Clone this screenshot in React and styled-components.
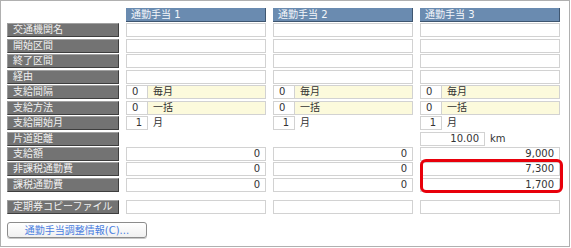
import React from "react";
import styled, { createGlobalStyle } from "styled-components";

const GlobalStyle = createGlobalStyle`
  html, body {
    margin: 0;
    padding: 0;
    background: #ffffff;
  }
  body {
    font-family: "DejaVu Sans", "Noto Sans CJK JP", sans-serif;
    font-size: 10px;
    line-height: 12px;
    color: #333333;
  }
`;

const Frame = styled.div`
  width: 570px;
  height: 247px;
  box-sizing: border-box;
  border: 1px solid #b0b0b0;
  padding: 7px 6px;
  background: #ffffff;
`;

const Grid = styled.div`
  display: grid;
  grid-template-columns: 112px repeat(3, 140px);
  column-gap: 7px;
  row-gap: 1.45px;
  grid-auto-rows: 14px;
  margin-top: ${(props) => props.$offset || "0"};
`;

const ColumnHeader = styled.div`
  grid-row: 1;
  grid-column: ${(props) => props.$col};
  display: flex;
  align-items: center;
  box-sizing: border-box;
  padding-left: 5px;
  background: #6a8bb0;
  border-right: 1px solid #3f5670;
  border-bottom: 1px solid #3f5670;
  color: #f4f7fb;
  white-space: nowrap;
`;

const Label = styled.div`
  grid-row: ${(props) => props.$row};
  grid-column: 1;
  display: flex;
  align-items: center;
  box-sizing: border-box;
  padding-left: 5px;
  background: #737373;
  border: 1px solid;
  border-color: #a0a0a0 #3e3e3e #3e3e3e #9a9a9a;
  color: #f0f0f0;
  white-space: nowrap;
`;

const Cell = styled.div`
  grid-row: ${(props) => props.$row};
  grid-column: ${(props) => props.$col};
  display: flex;
  align-items: stretch;
  min-width: 0;
`;

const Box = styled.div`
  display: flex;
  align-items: center;
  justify-content: ${(props) => (props.$align === "right" ? "flex-end" : "flex-start")};
  box-sizing: border-box;
  width: ${(props) => props.$w || "100%"};
  flex: ${(props) => (props.$grow ? "1" : "none")};
  padding: 0 5px;
  background: ${(props) => (props.$tone === "yellow" ? "#fcfadc" : "#ffffff")};
  border: 1px solid #d2d2d2;
  margin-left: ${(props) => (props.$joined ? "-1px" : "0")};
  white-space: nowrap;
`;

const Unit = styled.span`
  display: flex;
  align-items: center;
  padding-left: 5px;
  white-space: nowrap;
`;

const Highlight = styled.div`
  grid-column: 4;
  grid-row: 11 / span 2;
  margin: -3px -3px -1px 0;
  border: 3px solid #e8000b;
  border-radius: 6px;
  pointer-events: none;
  z-index: 1;
`;

const ActionButton = styled.button`
  display: block;
  margin-top: 8px;
  width: 140px;
  height: 16px;
  padding: 0;
  box-sizing: border-box;
  border: 1px solid #8c8c8c;
  border-radius: 3px;
  background: linear-gradient(#ffffff, #f0f0f0);
  box-shadow: 0 1px 0 #c8c8c8;
  color: #4a7ee0;
  font-family: "DejaVu Sans", "Noto Sans CJK JP", sans-serif;
  font-size: 10px;
  line-height: 13px;
  cursor: pointer;
`;

const columns = ["通勤手当 1", "通勤手当 2", "通勤手当 3"];

const rows = [
  { label: "交通機関名", kind: "text" },
  { label: "開始区間", kind: "text" },
  { label: "終了区間", kind: "text" },
  { label: "経由", kind: "text" },
  { label: "支給間隔", kind: "select", code: "0", text: "毎月" },
  { label: "支給方法", kind: "select", code: "0", text: "一括" },
  { label: "支給開始月", kind: "month", value: "1" },
  { label: "片道距離", kind: "distance", values: [null, null, "10.00"] },
  { label: "支給額", kind: "amount", values: ["0", "0", "9,000"] },
  { label: "非課税通勤費", kind: "amount", values: ["0", "0", "7,300"] },
  { label: "課税通勤費", kind: "amount", values: ["0", "0", "1,700"] },
];

const renderCell = (row, index, gridRow) => {
  const pos = { key: index, $row: gridRow, $col: index + 2 };
  switch (row.kind) {
    case "select":
      return (
        <Cell {...pos}>
          <Box $w="22px">{row.code}</Box>
          <Box $grow $joined $tone="yellow">
            {row.text}
          </Box>
        </Cell>
      );
    case "month":
      return (
        <Cell {...pos}>
          <Box $w="22px" $align="right">
            {row.value}
          </Box>
          <Unit>月</Unit>
        </Cell>
      );
    case "distance":
      if (!row.values[index]) return <Cell {...pos} />;
      return (
        <Cell {...pos}>
          <Box $w="65px" $align="right">
            {row.values[index]}
          </Box>
          <Unit>km</Unit>
        </Cell>
      );
    case "amount":
      return (
        <Cell {...pos}>
          <Box $align="right">{row.values[index]}</Box>
        </Cell>
      );
    default:
      return (
        <Cell {...pos}>
          <Box />
        </Cell>
      );
  }
};

const App = () => {
  return (
    <>
      <GlobalStyle />
      <Frame>
        <Grid>
          {columns.map((title, i) => (
            <ColumnHeader key={title} $col={i + 2}>
              {title}
            </ColumnHeader>
          ))}

          {rows.map((row, r) => (
            <React.Fragment key={row.label}>
              <Label $row={r + 2}>{row.label}</Label>
              {columns.map((_, i) => renderCell(row, i, r + 2))}
            </React.Fragment>
          ))}

          {/* 非課税 / 課税 highlight */}
          <Highlight />
        </Grid>

        <Grid $offset="8.5px">
          <Label $row={1}>定期券コピーファイル</Label>
          {columns.map((title, i) => (
            <Cell key={title} $row={1} $col={i + 2}>
              <Box />
            </Cell>
          ))}
        </Grid>

        <ActionButton>通勤手当調整情報(C)...</ActionButton>
      </Frame>
    </>
  );
};

export default App;
